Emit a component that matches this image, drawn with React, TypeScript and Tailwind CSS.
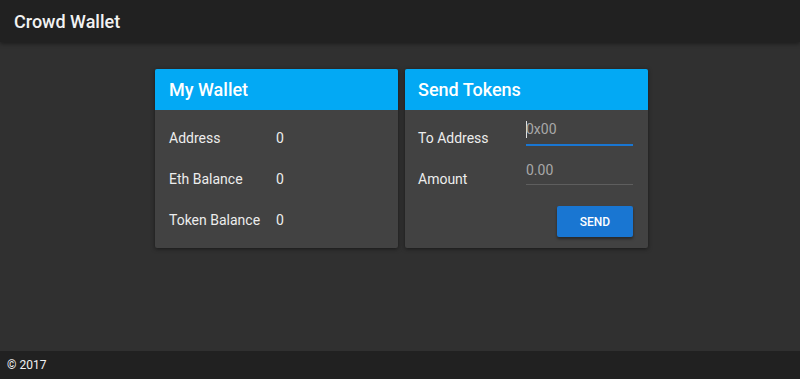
import React from "react";

const font = { fontFamily: "Roboto, 'Liberation Sans', sans-serif" };

function Row({ label, value }: { label: string; value: string }) {
  return (
    <div className="flex items-center h-[41px] text-[14px] text-[#ededed]">
      <span className="w-[107px]">{label}</span>
      <span>{value}</span>
    </div>
  );
}

export default function App() {
  return (
    <div className="h-[379px] flex flex-col bg-[#303030]" style={font}>
      <header className="h-[42px] shrink-0 bg-[#212121] flex items-center px-[14px] shadow-[0_2px_4px_rgba(0,0,0,0.4)] z-10">
        <h1 className="text-[18px] font-medium text-[#f2f2f2]">Crowd Wallet</h1>
      </header>

      <main className="flex-1 flex justify-center items-start gap-[7px] pt-[27px] pl-[3px]">
        <div className="w-[243px] h-[179px] bg-[#424242] rounded-[2px] shadow-[0_1px_4px_rgba(0,0,0,0.5)] overflow-hidden">
          <div className="h-[41px] bg-[#03a9f4] flex items-center px-[14px]">
            <h2 className="text-[18px] font-medium text-white">My Wallet</h2>
          </div>
          <div className="px-[14px] pt-[8px]">
            <Row label="Address" value="0" />
            <Row label="Eth Balance" value="0" />
            <Row label="Token Balance" value="0" />
          </div>
        </div>

        <div className="w-[243px] h-[179px] bg-[#424242] rounded-[2px] shadow-[0_1px_4px_rgba(0,0,0,0.5)] overflow-hidden">
          <div className="h-[41px] bg-[#03a9f4] flex items-center px-[13px]">
            <h2 className="text-[18px] font-medium text-white">Send Tokens</h2>
          </div>
          <div className="pl-[13px] pr-[15px] pt-[8px]">
            <div className="flex items-center h-[41px] text-[14px] text-[#ededed]">
              <span className="w-[108px]">To Address</span>
              <div className="flex-1 relative h-[41px]">
                <span className="absolute left-0 top-[3px] h-[17px] w-px bg-[#e0e0e0]" />
                <input
                  className="absolute left-0 top-[1px] w-full bg-transparent outline-none text-[14px] text-[#a8a8a8] placeholder:text-[#a8a8a8] pb-[4px] border-b-2 border-[#1976d2]"
                  style={font}
                  placeholder="0x00"
                />
              </div>
            </div>
            <div className="flex items-center h-[41px] text-[14px] text-[#ededed]">
              <span className="w-[108px]">Amount</span>
              <div className="flex-1 relative h-[41px]">
                <input
                  className="absolute left-0 top-[1px] w-full bg-transparent outline-none text-[14px] text-[#a8a8a8] placeholder:text-[#a8a8a8] pb-[3px] border-b border-[#5e5e5e]"
                  style={font}
                  placeholder="0.00"
                />
              </div>
            </div>
            <div className="flex justify-end pt-[6px]">
              <button className="w-[76px] h-[31px] bg-[#1976d2] rounded-[2px] text-white text-[12px] font-medium shadow-[0_2px_3px_rgba(0,0,0,0.4)]">
                SEND
              </button>
            </div>
          </div>
        </div>
      </main>

      <footer className="h-[28px] shrink-0 bg-[#212121] flex items-center px-[7px] text-[12px] text-[#f2f2f2]">
        © 2017
      </footer>
    </div>
  );
}
